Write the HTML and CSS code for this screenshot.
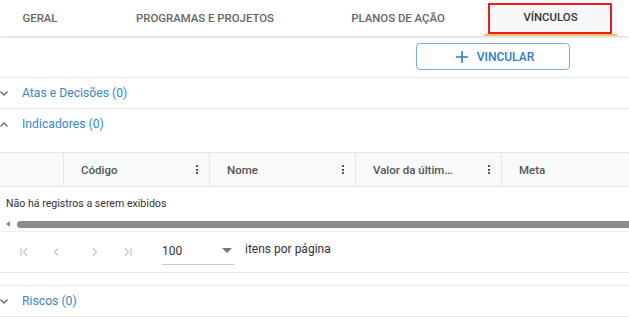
FILE: index.html
```html
<!DOCTYPE html>
<html lang="pt-BR">
<head>
    <meta charset="UTF-8">
    <meta name="viewport" content="width=device-width, initial-scale=1.0">
    <title>Vínculos</title>
    <link rel="stylesheet" href="styles.css">
</head>
<body>

<div class="tabs">
    <div class="tab tab-geral">GERAL</div>
    <div class="tab tab-programas">PROGRAMAS E PROJETOS</div>
    <div class="tab tab-planos">PLANOS DE AÇÃO</div>
    <div class="tab tab-vinculos active">VÍNCULOS
        <span class="highlight"></span>
    </div>
</div>

<div class="toolbar">
    <button class="btn-vincular">
        <svg width="12" height="12" viewBox="0 0 12 12"><path d="M6 0v12M0 6h12" stroke="#2f7cc4" stroke-width="1.6"/></svg>
        VINCULAR
    </button>
</div>

<div class="panel">
    <div class="panel-head">
        <svg class="chevron" width="8" height="5" viewBox="0 0 8 5"><polyline points="0.5,0.5 4,4 7.5,0.5" fill="none" stroke="#666" stroke-width="1.3"/></svg>
        <span class="panel-title">Atas e Decisões (0)</span>
    </div>
</div>

<div class="panel open">
    <div class="panel-head">
        <svg class="chevron" width="8" height="5" viewBox="0 0 8 5"><polyline points="0.5,4.5 4,1 7.5,4.5" fill="none" stroke="#666" stroke-width="1.3"/></svg>
        <span class="panel-title">Indicadores (0)</span>
    </div>

    <div class="grid">
        <div class="grid-header">
            <div class="col col-check"></div>
            <div class="col col-data">Código <span class="dots"><i></i><i></i><i></i></span></div>
            <div class="col col-data">Nome <span class="dots"><i></i><i></i><i></i></span></div>
            <div class="col col-data">Valor da últim… <span class="dots"><i></i><i></i><i></i></span></div>
            <div class="col col-last">Meta</div>
        </div>
        <div class="grid-empty">Não há registros a serem exibidos</div>
        <div class="scrollbar">
            <span class="arrow"></span>
            <span class="thumb"></span>
        </div>
    </div>

    <div class="paginator">
        <div class="pager-buttons">
            <svg class="pg-first" width="8" height="8" viewBox="0 0 8 8"><path d="M1 0v8M7 0.5L3.5 4L7 7.5" fill="none" stroke="#c4c4c4" stroke-width="1.2"/></svg>
            <svg class="pg-prev" width="6" height="8" viewBox="0 0 6 8"><path d="M5 0.5L1.5 4L5 7.5" fill="none" stroke="#c4c4c4" stroke-width="1.2"/></svg>
            <svg class="pg-next" width="6" height="8" viewBox="0 0 6 8"><path d="M1 0.5L4.5 4L1 7.5" fill="none" stroke="#c4c4c4" stroke-width="1.2"/></svg>
            <svg class="pg-last" width="8" height="8" viewBox="0 0 8 8"><path d="M1 0.5L4.5 4L1 7.5M7 0v8" fill="none" stroke="#c4c4c4" stroke-width="1.2"/></svg>
        </div>
        <div class="page-size">
            <span>100</span>
            <span class="caret"></span>
        </div>
        <span class="page-label">itens por página</span>
    </div>
</div>

<div class="panel last">
    <div class="panel-head">
        <svg class="chevron" width="8" height="5" viewBox="0 0 8 5"><polyline points="0.5,0.5 4,4 7.5,0.5" fill="none" stroke="#666" stroke-width="1.3"/></svg>
        <span class="panel-title">Riscos (0)</span>
    </div>
</div>

</body>
</html>
```

FILE: styles.css
```css
body {
    margin: 0;
    font-family: Roboto, "Noto Sans", sans-serif;
    background: #fff;
    color: #333;
    overflow: hidden;
}
.tabs {
    display: flex;
    height: 36px;
    box-shadow: 0 1px 3px rgba(0,0,0,0.18);
    position: relative;
}
.tab {
    display: flex;
    align-items: center;
    justify-content: center;
    font-size: 11.4px;
    font-weight: 500;
    color: #666;
}
.tab-geral { width: 80px; }
.tab-programas { width: 250px; }
.tab-planos { width: 136px; }
.tab-vinculos {
    width: 133px;
    margin-left: 18px;
    background: #f6f8fa;
    color: #333;
    position: relative;
    border-bottom: 2px solid #f2c46a;
    box-sizing: border-box;
}
.highlight {
    position: absolute;
    left: 4px;
    right: 5px;
    top: 3px;
    bottom: 0;
    border: 2px solid #ee1c1c;
}
.toolbar {
    border-bottom: 1px solid #e8e8e8;
    padding-top: 7px;
    box-sizing: border-box;
    height: 42px;
}
.btn-vincular {
    margin-left: 416px;
    width: 154px;
    height: 27px;
    border: 1px solid #7aaedb;
    border-radius: 4px;
    background: #fff;
    color: #2f7cc4;
    font-family: Roboto, sans-serif;
    font-size: 12px;
    font-weight: 500;
    display: flex;
    align-items: center;
    justify-content: center;
    gap: 9px;
    padding: 0 0 0 4px;
}
.panel {
    border-bottom: 1px solid #e8e8e8;
}
.panel-head {
    height: 30px;
    display: flex;
    align-items: center;
}
.chevron {
    flex: none;
    margin: 1px 14px 0 0;
}
.panel-title {
    font-size: 12.2px;
    color: #3a87c9;
}
.grid {
    margin-top: 13px;
}
.grid-header {
    display: flex;
    height: 35px;
    background: #f8f9f9;
    border-top: 1px solid #e6e6e6;
    border-bottom: 1px solid #e6e6e6;
    box-sizing: border-box;
}
.col {
    display: flex;
    align-items: center;
    font-size: 11.5px;
    font-weight: 500;
    color: #555;
    box-sizing: border-box;
    border-right: 1px solid #e6e6e6;
}
.col-check { width: 64px; }
.col-data {
    width: 146px;
    padding-left: 17px;
    justify-content: space-between;
    padding-right: 11px;
}
.col-last {
    padding-left: 17px;
    border-right: none;
    flex: 1;
}
.dots {
    display: flex;
    flex-direction: column;
    gap: 1.5px;
}
.dots i {
    display: block;
    width: 2px;
    height: 2px;
    background: #555;
}
.grid-empty {
    font-size: 10.6px;
    color: #333;
    padding: 10px 0 0 6px;
    height: 27px;
    box-sizing: border-box;
}
.scrollbar {
    display: flex;
    align-items: center;
    height: 14px;
    border-bottom: 1px solid #eee;
    margin-top: 3px;
}
.arrow {
    width: 0;
    height: 0;
    border-top: 3.5px solid transparent;
    border-bottom: 3.5px solid transparent;
    border-right: 4px solid #8a8a8a;
    margin-left: 6px;
}
.thumb {
    flex: 1;
    height: 7px;
    margin-left: 7px;
    background: #8c8c8c;
    border-radius: 4px 0 0 4px;
}
.paginator {
    display: flex;
    align-items: center;
    height: 40px;
}
.pager-buttons {
    display: flex;
    align-items: center;
    width: 162px;
    flex: none;
}
.pg-first { margin-left: 20px; }
.pg-prev { margin-left: 25px; }
.pg-next { margin-left: 33px; }
.pg-last { margin-left: 26px; }
.page-size {
    width: 72px;
    height: 28px;
    border-bottom: 1px solid #c6c6c6;
    display: flex;
    align-items: center;
    justify-content: space-between;
    font-size: 12px;
    color: #333;
    box-sizing: border-box;
    margin-top: -2px;
}
.caret {
    width: 0;
    height: 0;
    border-left: 5px solid transparent;
    border-right: 5px solid transparent;
    border-top: 5px solid #777;
    margin: 0 2px 0 0;
}
.page-label {
    font-size: 12px;
    color: #333;
    margin-left: 11px;
    margin-top: -6px;
}
.panel.open {
    margin-bottom: 12px;
}
.panel.last {
    border-top: 1px solid #e8e8e8;
    border-bottom: 1px solid #e8e8e8;
}
```
